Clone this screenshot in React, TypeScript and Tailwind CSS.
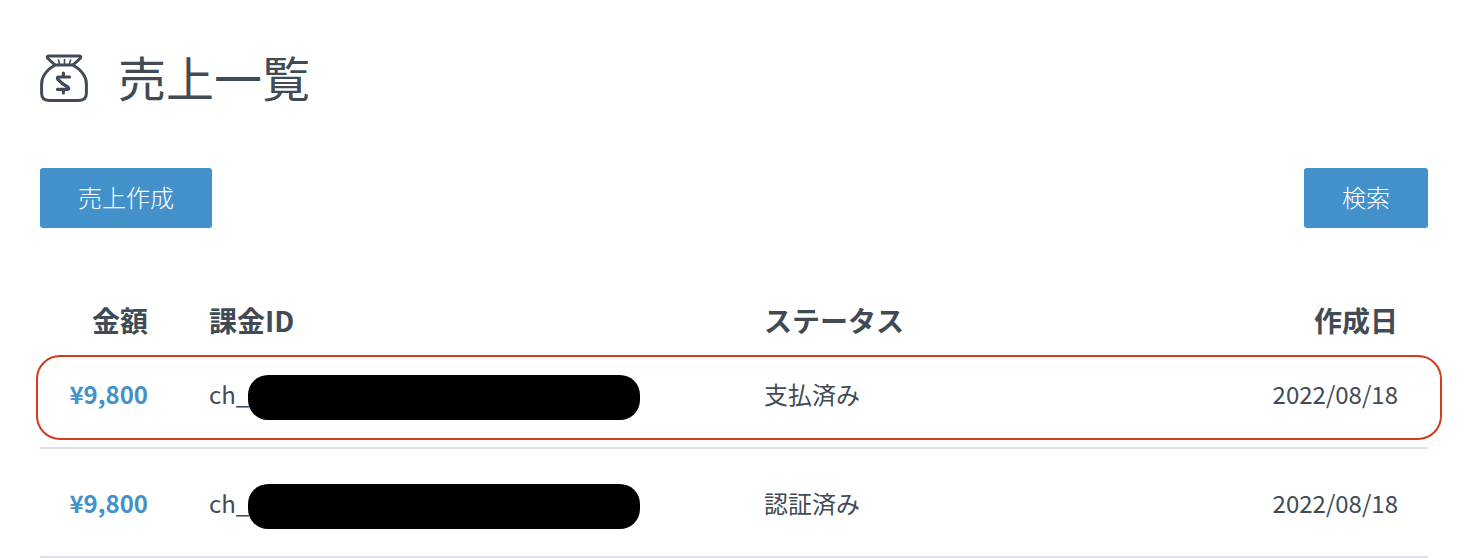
const font = "font-['Noto_Sans_CJK_JP','Noto_Sans',sans-serif]";

function BagIcon() {
  return (
    <svg width="48" height="48" viewBox="0 0 48 48" fill="none" stroke="#414b55" strokeWidth="3" strokeLinecap="round" strokeLinejoin="round" className="shrink-0">
      <path d="M15 11 L7.4 4 Q6.6 2 9 2 L39 2 Q41.4 2 40.6 4 L33 11 C40 15 46.4 22 46.4 30 L46.4 39 Q46.4 46.4 39 46.4 L9 46.4 Q1.6 46.4 1.6 39 L1.6 30 C1.6 22 8 15 15 11 Z" />
      <path d="M15 11 L33 11" />
      <path d="M19.5 10 L18.5 6 M24.5 10 L24.5 5.5 M29.5 10 L30.5 6" strokeWidth="1.6" />
      <path d="M29.5 23 L19 23 Q16.8 23 17.6 25 L22 29.4 L28 33.2 Q29.8 35.4 27.4 35.4 L17.5 35.4 M23.4 19 L23.4 23 M23.4 35.5 L23.4 39" strokeWidth="3.2" />
    </svg>
  );
}

function Row({ amount, status, highlight }: { amount: string; status: string; highlight?: boolean }) {
  return (
    <div className="relative grid h-[109px] grid-cols-[108px_494px_1fr_auto] items-center gap-x-[61px] border-b-2 border-[#dee2e6] pt-[1px] pr-[30px] text-[24px] text-[#414b55]">
      <div className="text-right font-bold text-[#4291cb]">{amount}</div>
      <div className="flex items-center">
        <span>ch_</span>
        <span className="mt-[6px] -ml-[1px] h-[45px] w-[392px] rounded-[20px] bg-black" />
      </div>
      <div>{status}</div>
      <div className="text-right">2022/08/18</div>
      {highlight && (
        <div className="absolute -left-[4px] -right-[14px] top-[15px] h-[85px] rounded-[24px] border-2 border-[#d13c21]" />
      )}
    </div>
  );
}

export default function App() {
  return (
    <div className={`${font} h-[558px] overflow-hidden bg-white pl-[40px] pr-[42px] pt-[54px] text-[#414b55]`}>
      <div className="flex h-[48px] items-center gap-[30px]">
        <BagIcon />
        <h1 className="pb-[4px] text-[48px] leading-none font-normal">売上一覧</h1>
      </div>
      <div className="mt-[66px] flex justify-between">
        <button className="h-[60px] w-[172px] rounded-[3px] bg-[#4291cb] pb-[3px] text-[24px] font-light text-white">売上作成</button>
        <button className="h-[60px] w-[124px] rounded-[3px] bg-[#4291cb] pb-[3px] text-[24px] font-light text-white">検索</button>
      </div>
      <div className="mt-[71px]">
        <div className="grid h-[41px] grid-cols-[108px_494px_1fr_auto] items-center gap-x-[61px] pr-[30px] text-[28px] font-bold">
          <div className="text-right">金額</div>
          <div>課金ID</div>
          <div>ステータス</div>
          <div className="text-right">作成日</div>
        </div>
        <Row amount="¥9,800" status="支払済み" highlight />
        <Row amount="¥9,800" status="認証済み" />
      </div>
    </div>
  );
}
